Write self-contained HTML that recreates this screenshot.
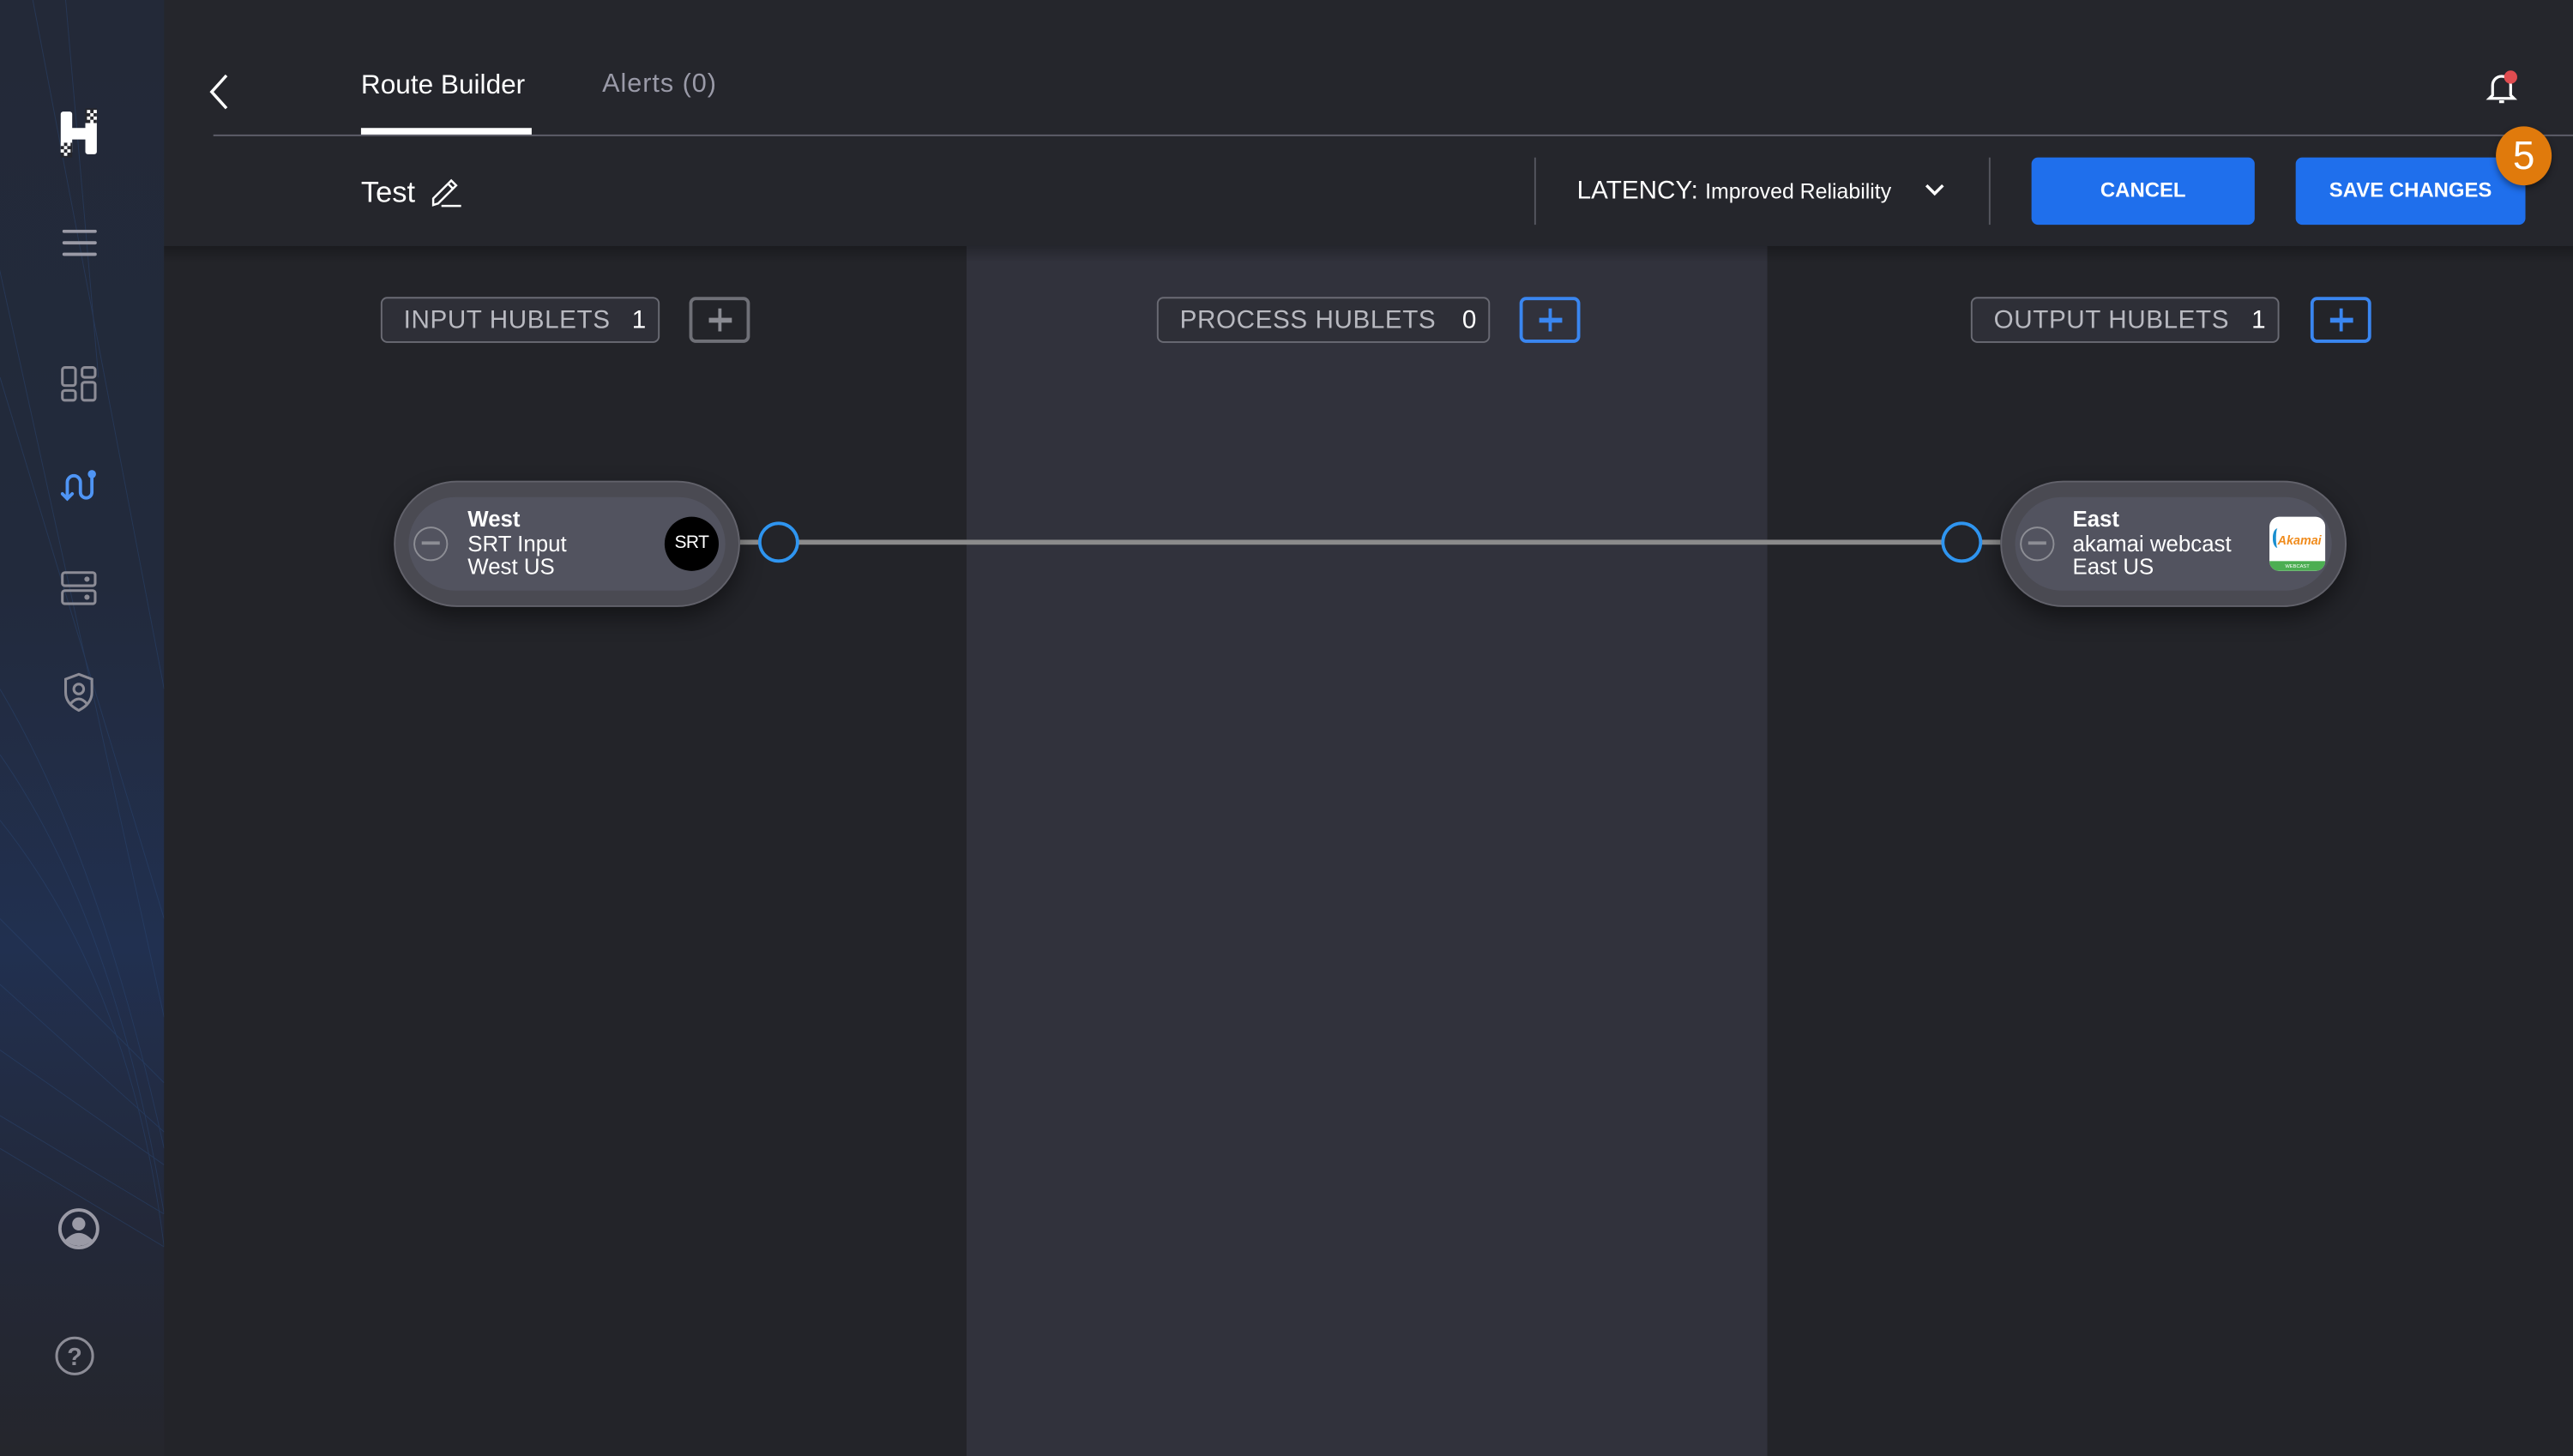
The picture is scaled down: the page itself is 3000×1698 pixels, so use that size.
<!DOCTYPE html>
<html><head><meta charset="utf-8">
<style>
*{margin:0;padding:0;box-sizing:border-box}
html,body{width:3000px;height:1698px;overflow:hidden;background:#25262c}
#s{position:absolute;left:0;top:0;width:1568px;height:887.5px;transform:scale(1.91327);transform-origin:0 0;font-family:"Liberation Sans",sans-serif;color:#fff;background:#25262c;overflow:hidden}
.a{position:absolute}
.side{left:0;top:0;width:100px;height:888px;background:linear-gradient(180deg,#232938 0%,#222a3c 40%,#213050 65%,#232838 85%,#25262c 100%)}
.canvas{left:100px;top:150px;width:1468px;height:738px;background:#232429}
.mid{left:589px;top:150px;width:488px;height:738px;background:#31323c}
.pill{height:28px;border:1px solid #6a6b74;border-radius:4px;background:#2e2f37;color:#b8b9c0;font-size:15.5px;line-height:28px;padding-left:13px;letter-spacing:.3px}
.pill b{font-weight:normal;color:#fff;position:absolute;right:7px}
.plus{width:37px;height:28px;border:2px solid #6f7077;border-radius:4px}
.plus.bl{border-color:#3a86f0}
.plus:before,.plus:after{content:"";position:absolute;background:#8a8b92;left:50%;top:50%}
.plus:before{width:14px;height:2.6px;transform:translate(-50%,-50%)}
.plus:after{width:2.6px;height:14px;transform:translate(-50%,-50%)}
.plus.bl:before,.plus.bl:after{background:#3a86f0}
.node{height:77px;border-radius:39px;background:#4a4a52;border:1px solid #62626b;box-shadow:0 6px 14px rgba(0,0,0,.45)}
.node .in{position:absolute;left:8px;top:9px;right:8px;bottom:9px;border-radius:30px;background:#52535f}
.node .t{position:absolute;font-size:13.5px;line-height:14.5px;color:#fff}
.mn{width:21px;height:21px;border:1.7px solid #8d8e95;border-radius:50%}
.mn:after{content:"";position:absolute;left:4px;right:4px;top:8px;height:1.7px;background:#8d8e95}
.port{width:25px;height:25px;border:2.5px solid #2f95f0;border-radius:50%;background:#232429}
.btn{height:41px;background:#1f6fec;border-radius:4px;font-size:12.5px;font-weight:bold;text-align:center;line-height:41px}
</style></head><body><div id="s">
<div class="a side"></div>
<svg class="a" style="left:0;top:0" width="100" height="888" viewBox="0 0 100 888">
<g stroke="#2c4a78" stroke-width=".5" fill="none" opacity=".45">
<path d="M20 0 L100 420"/><path d="M-10 120 L100 620"/><path d="M40 0 L60 230"/><path d="M0 230 L100 560"/>
<path d="M0 420 Q60 520 100 700"/><path d="M0 460 Q70 560 100 740"/><path d="M0 500 Q80 600 100 760"/>
<path d="M0 560 L100 660"/><path d="M0 600 L100 690"/><path d="M0 640 L100 710"/><path d="M0 680 L100 740"/><path d="M0 700 L100 760"/>
</g></svg>
<!-- logo -->
<svg class="a" style="left:34px;top:66px" width="28" height="30" viewBox="0 0 28 30">
<g fill="#fff">
<rect x="3" y="2" width="7" height="26" rx="1.5"/>
<rect x="18" y="2" width="7" height="26" rx="1.5"/>
<rect x="9" y="12" width="10" height="7"/>
</g>
<g fill="#25262c"><rect x="18" y="0" width="7" height="9"/><rect x="3" y="21" width="7" height="9"/></g>
<g fill="#fff"><rect x="19" y="1" width="2" height="2"/><rect x="23" y="1" width="2" height="2"/><rect x="21" y="3" width="2" height="2"/><rect x="19" y="5" width="2" height="2"/><rect x="23" y="5" width="2" height="2"/><rect x="21" y="7" width="2" height="2"/><rect x="3" y="21" width="2" height="2"/><rect x="7" y="21" width="2" height="2"/><rect x="5" y="23" width="2" height="2"/><rect x="3" y="25" width="2" height="2"/><rect x="7" y="25" width="2" height="2"/><rect x="5" y="27" width="2" height="2"/></g>
</svg>
<svg class="a" style="left:38px;top:140px" width="21" height="16"><g fill="#9a9aa6"><rect y="0" width="21" height="2" rx="1"/><rect y="7" width="21" height="2" rx="1"/><rect y="14" width="21" height="2" rx="1"/></g></svg>
<svg class="a" style="left:37px;top:223px" width="22" height="22" fill="none" stroke="#8c8c96" stroke-width="1.6"><rect x="1" y="1" width="8" height="11" rx="1.5"/><rect x="13" y="1" width="8" height="6" rx="1.5"/><rect x="1" y="15" width="8" height="6" rx="1.5"/><rect x="13" y="10" width="8" height="11" rx="1.5"/></svg>
<svg class="a" style="left:37px;top:285px" width="22" height="22" fill="none" stroke="#4f95f5" stroke-width="2" stroke-linecap="round"><path d="M4 19 V9 a4 4 0 0 1 8 0 v6 a3.5 3.5 0 0 0 7 0 V5"/><path d="M1 16 l3 3 l3 -3"/><circle cx="19" cy="4" r="2.5" fill="#4f95f5" stroke="none"/></svg>
<svg class="a" style="left:37px;top:348px" width="22" height="22" fill="none" stroke="#8c8c96" stroke-width="1.6"><rect x="1" y="1" width="20" height="8" rx="1.5"/><rect x="1" y="12" width="20" height="8" rx="1.5"/><circle cx="16" cy="5" r=".8" fill="#8c8c96"/><circle cx="16" cy="16" r=".8" fill="#8c8c96"/></svg>
<svg class="a" style="left:37px;top:410px" width="22" height="24" fill="none" stroke="#8c8c96" stroke-width="1.6"><path d="M11 1 L19 4 V12 Q19 19 11 23 Q3 19 3 12 V4 Z"/><circle cx="11" cy="10" r="3"/><path d="M6 19 Q11 13 16 19"/></svg>
<svg class="a" style="left:35px;top:736px" width="26" height="26"><circle cx="13" cy="13" r="11.5" fill="none" stroke="#9a9aa6" stroke-width="2"/><circle cx="13" cy="10" r="4" fill="#9a9aa6"/><path d="M4.5 20 Q13 11 21.5 20 Q13 27 4.5 20Z" fill="#9a9aa6"/></svg>
<svg class="a" style="left:33px;top:814px" width="25" height="25"><circle cx="12.5" cy="12.5" r="11" fill="none" stroke="#8c8c96" stroke-width="1.6"/><text x="12.5" y="18" text-anchor="middle" font-family="Liberation Sans" font-weight="bold" font-size="15" fill="#8c8c96">?</text></svg>

<div class="a canvas"></div>
<div class="a mid"></div>
<div class="a" style="left:100px;top:150px;width:1468px;height:10px;background:linear-gradient(rgba(0,0,0,.25),rgba(0,0,0,0))"></div>

<!-- header -->
<svg class="a" style="left:126px;top:44px" width="14" height="24" fill="none" stroke="#fff" stroke-width="1.8"><path d="M12 2 L3 12 L12 22"/></svg>
<div class="a" style="left:220px;top:43px;font-size:16.5px">Route Builder</div>
<div class="a" style="left:367px;top:43px;font-size:16px;color:#9a9aa8;letter-spacing:.5px">Alerts (0)</div>
<div class="a" style="left:130px;top:81.5px;width:1438px;height:1.5px;background:#5f5f6b"></div>
<div class="a" style="left:220px;top:78px;width:104px;height:3.5px;background:#fff"></div>
<svg class="a" style="left:1514px;top:42px" width="22" height="22" fill="none" stroke="#fff" stroke-width="1.7"><path d="M5 16 V10 a5.5 5.5 0 0 1 11 0 V16 L18 18 H3 Z"/><path d="M9 20 h3"/><circle cx="16" cy="5" r="4" fill="#e04c50" stroke="none"/></svg>
<div class="a" style="left:220px;top:107px;font-size:18px">Test</div>
<svg class="a" style="left:262px;top:107px" width="20" height="20" fill="none" stroke="#fff" stroke-width="1.3"><path d="M2 18 V14 L13 3 L16 6 L5 17 Z"/><path d="M11 5 L14 8"/><path d="M7 18.5 H19"/></svg>
<div class="a" style="left:935px;top:96px;width:1px;height:41px;background:#55565f"></div>
<div class="a" style="left:961px;top:108px;font-size:15.5px">LATENCY: <span style="font-size:13px">Improved Reliability</span></div>
<svg class="a" style="left:1172px;top:111px" width="14" height="10" fill="none" stroke="#fff" stroke-width="1.8"><path d="M2 2 L7 7 L12 2"/></svg>
<div class="a" style="left:1212px;top:96px;width:1px;height:41px;background:#55565f"></div>
<div class="a btn" style="left:1238px;top:96px;width:136px">CANCEL</div>
<div class="a btn" style="left:1399px;top:96px;width:140px">SAVE CHANGES</div>
<div class="a" style="left:1521px;top:77px;width:34px;height:36px;border-radius:50%;background:#e07a0c;box-shadow:0 2px 4px rgba(0,0,0,.4);font-size:24px;text-align:center;line-height:37px">5</div>

<!-- hublets -->
<div class="a pill" style="left:232px;top:181px;width:170px">INPUT HUBLETS<b>1</b></div>
<div class="a plus" style="left:420px;top:181px"></div>
<div class="a pill" style="left:705px;top:181px;width:203px">PROCESS HUBLETS<b>0</b></div>
<div class="a plus bl" style="left:926px;top:181px"></div>
<div class="a pill" style="left:1201px;top:181px;width:188px">OUTPUT HUBLETS<b>1</b></div>
<div class="a plus bl" style="left:1408px;top:181px"></div>

<!-- connection -->
<div class="a" style="left:451px;top:328.5px;width:768px;height:3px;background:#8b8b8b"></div>
<div class="a port" style="left:462px;top:318px"></div>
<div class="a port" style="left:1183px;top:318px"></div>

<div class="a node" style="left:240px;top:293px;width:211px">
 <div class="in"></div>
 <div class="a mn" style="left:11px;top:27px"></div>
 <div class="t" style="left:44px;top:16px"><b>West</b><br>SRT Input<br>West US</div>
 <div class="a" style="left:164px;top:21px;width:33px;height:33px;border-radius:50%;background:#000;font-size:11px;text-align:center;line-height:33px;letter-spacing:-.3px">SRT</div>
</div>
<div class="a node" style="left:1219px;top:293px;width:211px">
 <div class="in"></div>
 <div class="a mn" style="left:11px;top:27px"></div>
 <div class="t" style="left:43px;top:16px"><b>East</b><br>akamai webcast<br>East US</div>
 <div class="a" style="left:163px;top:21px;width:34px;height:33px;border-radius:6px;background:#fff;overflow:hidden">
  <div class="a" style="left:5px;top:10px;font-size:7.5px;font-style:italic;font-weight:bold;color:#f08c1e">Akamai</div>
  <div class="a" style="left:2px;top:7px;width:6px;height:12px;border-left:2px solid #1a8fd0;border-radius:50%"></div>
  <div class="a" style="left:0;bottom:0;width:34px;height:6px;background:#4cae52;font-size:3px;text-align:center;line-height:6px">WEBCAST</div>
 </div>
</div>
</div></body></html>
